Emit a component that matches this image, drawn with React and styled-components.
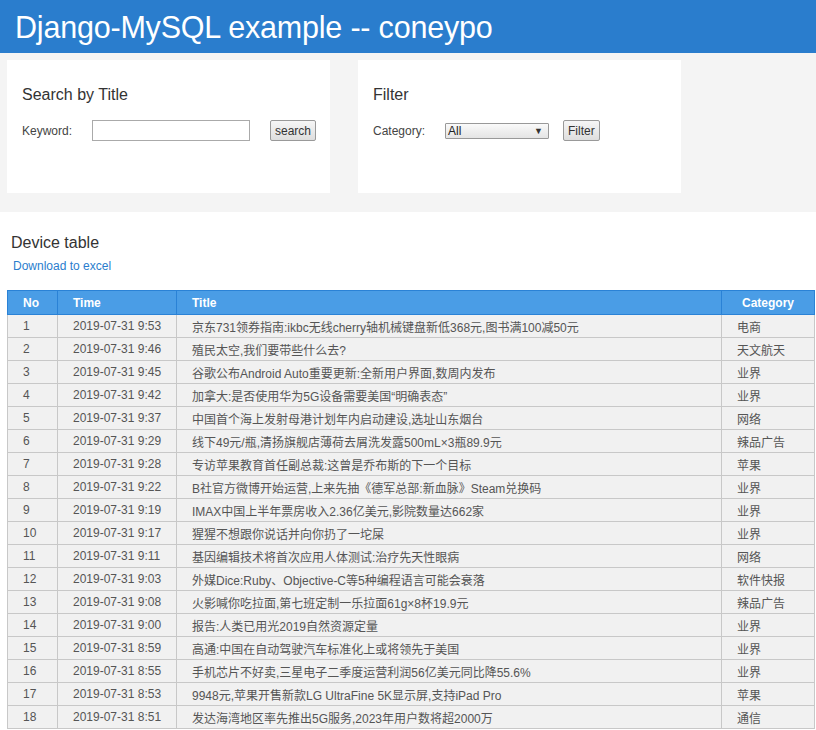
import React from "react";
import styled, { createGlobalStyle } from "styled-components";

const Global = createGlobalStyle`
  html, body { margin: 0; padding: 0; background: #fff; }
  body { font-family: "Liberation Sans", Arial, "Noto Sans CJK SC", sans-serif; color: #333; }
`;

const Header = styled.header`
  background: #2a7dcd;
  height: 53px;
  display: flex;
  align-items: center;
  padding-left: 15px;
`;
const HeaderTitle = styled.h1`
  margin: 0;
  color: #fff;
  font-weight: normal;
  font-size: 30.5px;
  letter-spacing: -0.2px;
  line-height: 1;
  padding-top: 1px;
`;

const Band = styled.section`
  background: #f4f4f4;
  height: 159px;
  padding: 7px 7px 0;
  box-sizing: border-box;
  display: flex;
  gap: 28px;
`;
const Card = styled.div`
  background: #fff;
  width: 323px;
  height: 133px;
  box-sizing: border-box;
  padding: 25px 0 0 15px;
`;
const CardTitle = styled.h3`
  margin: 0 0 16px;
  font-size: 16px;
  font-weight: normal;
  color: #333;
  line-height: 19px;
`;
const FormRow = styled.div`
  display: flex;
  align-items: center;
  height: 21px;
  font-size: 12px;
  color: #444;
`;
const Label = styled.span`
  width: ${(p) => p.$w}px;
`;
const TextInput = styled.input`
  width: 158px;
  height: 21px;
  box-sizing: border-box;
  border: 1px solid #aaa;
  padding: 0 3px;
  margin: 0;
`;
const Button = styled.button`
  margin-left: ${(p) => p.$ml}px;
  height: 21px;
  box-sizing: border-box;
  padding: 0 4px;
  font-family: "Liberation Sans", Arial, sans-serif;
  font-size: 12px;
  color: #333;
  border: 1px solid #999;
  border-radius: 2px;
  background: linear-gradient(#f6f6f6, #dedede);
`;
const SelectBox = styled.div`
  width: 104px;
  height: 16px;
  box-sizing: border-box;
  border: 1px solid #999;
  border-radius: 1px;
  background: linear-gradient(#fafafa, #e4e4e4);
  display: flex;
  align-items: center;
  justify-content: space-between;
  padding: 0 5px 0 2px;
  font-size: 12px;
  color: #222;
`;
const Arrow = styled.span`
  font-size: 9px;
  color: #333;
`;

const Section = styled.section`
  padding: 21px 0 0 7px;
`;
const SectionTitle = styled.h3`
  margin: 0 0 7px 4px;
  font-size: 16px;
  font-weight: normal;
  color: #333;
  line-height: 19px;
`;
const Link = styled.a`
  display: block;
  margin-left: 6px;
  font-size: 12px;
  color: #2a7dcd;
  text-decoration: none;
  line-height: 14px;
  margin-bottom: 17px;
`;

const Table = styled.table`
  border-collapse: collapse;
  table-layout: fixed;
  width: 807px;
  font-size: 12px;
  font-family: "Liberation Sans", Arial, "Noto Sans CJK SC", sans-serif;
`;
const Th = styled.th`
  background: #4a9de6;
  color: #fff;
  font-weight: bold;
  height: 24px;
  padding: 0 0 0 ${(p) => (p.$center ? 0 : 15)}px;
  border: 1px solid #2a82d6;
  text-align: ${(p) => (p.$center ? "center" : "left")};
  box-sizing: border-box;
`;
const Td = styled.td`
  background: #f1f1f1;
  color: #555;
  height: 22px;
  padding: 0 0 0 15px;
  border: 1px solid #c8c8c8;
  white-space: nowrap;
  overflow: hidden;
`;

const rows = [
  ["2019-07-31 9:53", "京东731领券指南:ikbc无线cherry轴机械键盘新低368元,图书满100减50元", "电商"],
  ["2019-07-31 9:46", "殖民太空,我们要带些什么去?", "天文航天"],
  ["2019-07-31 9:45", "谷歌公布Android Auto重要更新:全新用户界面,数周内发布", "业界"],
  ["2019-07-31 9:42", "加拿大:是否使用华为5G设备需要美国“明确表态”", "业界"],
  ["2019-07-31 9:37", "中国首个海上发射母港计划年内启动建设,选址山东烟台", "网络"],
  ["2019-07-31 9:29", "线下49元/瓶,清扬旗舰店薄荷去屑洗发露500mL×3瓶89.9元", "辣品广告"],
  ["2019-07-31 9:28", "专访苹果教育首任副总裁:这曾是乔布斯的下一个目标", "苹果"],
  ["2019-07-31 9:22", "B社官方微博开始运营,上来先抽《德军总部:新血脉》Steam兑换码", "业界"],
  ["2019-07-31 9:19", "IMAX中国上半年票房收入2.36亿美元,影院数量达662家", "业界"],
  ["2019-07-31 9:17", "猩猩不想跟你说话并向你扔了一坨屎", "业界"],
  ["2019-07-31 9:11", "基因编辑技术将首次应用人体测试:治疗先天性眼病", "网络"],
  ["2019-07-31 9:03", "外媒Dice:Ruby、Objective-C等5种编程语言可能会衰落", "软件快报"],
  ["2019-07-31 9:08", "火影喊你吃拉面,第七班定制一乐拉面61g×8杯19.9元", "辣品广告"],
  ["2019-07-31 9:00", "报告:人类已用光2019自然资源定量", "业界"],
  ["2019-07-31 8:59", "高通:中国在自动驾驶汽车标准化上或将领先于美国", "业界"],
  ["2019-07-31 8:55", "手机芯片不好卖,三星电子二季度运营利润56亿美元同比降55.6%", "业界"],
  ["2019-07-31 8:53", "9948元,苹果开售新款LG UltraFine 5K显示屏,支持iPad Pro", "苹果"],
  ["2019-07-31 8:51", "发达海湾地区率先推出5G服务,2023年用户数将超2000万", "通信"],
];

export default function App() {
  return (
    <>
      <Global />
      <Header>
        <HeaderTitle>Django-MySQL example -- coneypo</HeaderTitle>
      </Header>
      <Band>
        <Card>
          <CardTitle>Search by Title</CardTitle>
          <FormRow>
            <Label $w={70}>Keyword:</Label>
            <TextInput />
            <Button $ml={20}>search</Button>
          </FormRow>
        </Card>
        <Card>
          <CardTitle>Filter</CardTitle>
          <FormRow>
            <Label $w={72}>Category:</Label>
            <SelectBox>
              <span>All</span>
              <Arrow>▼</Arrow>
            </SelectBox>
            <Button $ml={14}>Filter</Button>
          </FormRow>
        </Card>
      </Band>
      <Section>
        <SectionTitle>Device table</SectionTitle>
        <Link href="#">Download to excel</Link>
        <Table>
          <colgroup>
            <col style={{ width: 50 }} />
            <col style={{ width: 119 }} />
            <col style={{ width: 545 }} />
            <col style={{ width: 93 }} />
          </colgroup>
          <thead>
            <tr>
              <Th>No</Th>
              <Th>Time</Th>
              <Th>Title</Th>
              <Th $center>Category</Th>
            </tr>
          </thead>
          <tbody>
            {rows.map((r, i) => (
              <tr key={i}>
                <Td>{i + 1}</Td>
                <Td>{r[0]}</Td>
                <Td>{r[1]}</Td>
                <Td>{r[2]}</Td>
              </tr>
            ))}
          </tbody>
        </Table>
      </Section>
    </>
  );
}
